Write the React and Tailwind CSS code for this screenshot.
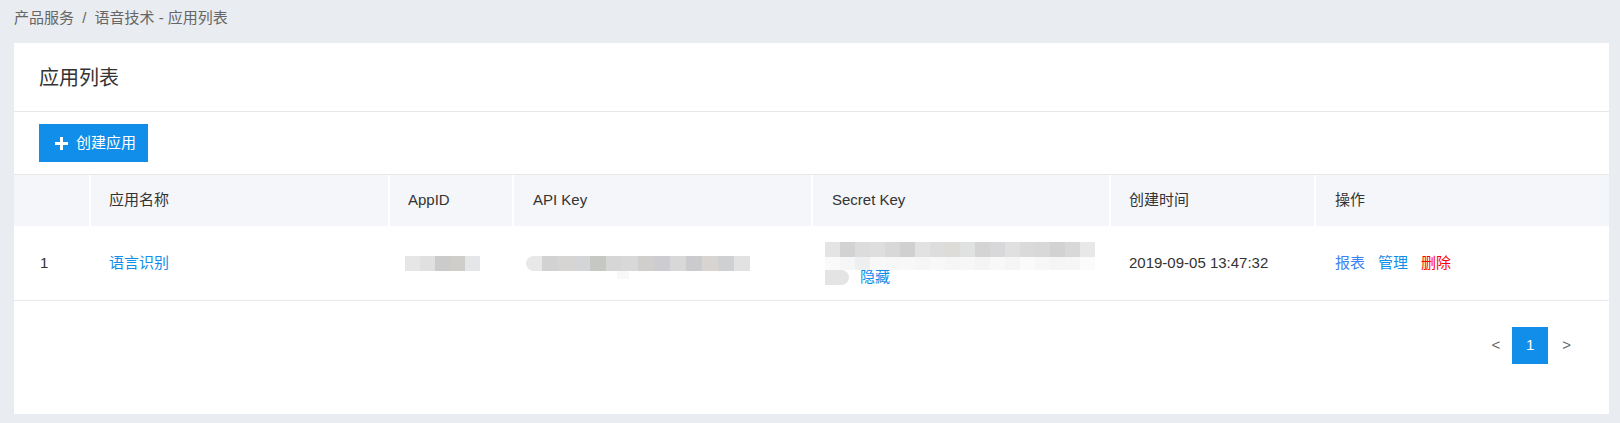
import React from 'react';

const font = { fontFamily: '"Liberation Sans", "Noto Sans CJK SC", sans-serif' };

// 打码的马赛克块
const Mosaic = ({ shades, size = 15, height = 15, round }) => (
    <div className="flex blur-[0.6px]">
        {shades.map((c, i) => (
            <div
                key={i}
                className={i === 0 && round ? 'rounded-l-full' : ''}
                style={{ width: size, height, background: c }}
            />
        ))}
    </div>
);

const appIdShades = ['#e6e6e6', '#e0e0e0', '#cbcbcb', '#d0ceca', '#e4e6e8'];
const apiKeyShades = ['#e8e8e8', '#d2d2d2', '#d6d5d4', '#d3d5d6', '#c6c8c4', '#d6d6d6', '#d8d8d8', '#d0cfcd', '#cdccd1', '#d8d8d8', '#cbcbcd', '#d8d4d1', '#cfd0d2', '#e2e2e2'];
const secretShades1 = ['#e4e4e4', '#d2d2d2', '#dcdcdc', '#dedede', '#d8d8d8', '#d0d0d0', '#e2e2e2', '#dddddd', '#dedcd8', '#e0e2e2', '#d4d4d4', '#d8d8da', '#e0e0e0', '#dadada', '#d8d8d8', '#d2d2d2', '#d8d8d8', '#e8e8e8'];
const secretShades2 = ['#fafafa', '#f6f6f6', '#eeeff1', '#f8f8f8', '#f7f7f7', '#f8f8f8', '#f6f6f6', '#f8f8f8', '#f6f6f6', '#f7f7f7', '#f4f4f4', '#f8f8f8', '#f5f5f5', '#fafafa', '#f7f7f7', '#f5f5f5', '#f6f6f6', '#fbfbfb'];

const cols = 'grid grid-cols-[75px_299px_124px_299px_298px_205px_295px]';

const App = () => {
    return (
        <div className="h-[423px] bg-[#e9ecf0] pl-[14px] pr-[11px] text-[#333]" style={font}>
            {/* 面包屑 */}
            <div className="h-[43px] pt-[7px] text-[15px] leading-[22px] text-[#666]">
                产品服务 <span className="mx-[4px]">/</span> 语音技术 - 应用列表
            </div>

            {/* 卡片 */}
            <div className="h-[371px] bg-white">
                <div className="flex h-[69px] items-center border-b border-[#e8e8e8] px-[25px] pt-[1px] text-[20px] text-[#333]">
                    应用列表
                </div>

                <div className="px-[25px] pt-[12px] pb-[12px]">
                    <button className="flex h-[38px] w-[109px] items-center bg-[#108ee9] pl-[15px] text-[15px] text-white">
                        <svg width="15" height="15" viewBox="0 0 15 15" className="mr-[7px]">
                            <path d="M7.5 1v13M1 7.5h13" stroke="#fff" strokeWidth="3" />
                        </svg>
                        创建应用
                    </button>
                </div>

                {/* 表格 */}
                <div className="border-t border-[#e8e8e8]">
                    <div className={`${cols} h-[51px] items-center bg-[#f5f6fa] text-[15px]`}>
                        <div className="h-full" />
                        <div className="flex h-full items-center border-l-2 border-white pl-[18px]">应用名称</div>
                        <div className="flex h-full items-center border-l-2 border-white pl-[18px]">AppID</div>
                        <div className="flex h-full items-center border-l-2 border-white pl-[19px]">API Key</div>
                        <div className="flex h-full items-center border-l-2 border-white pl-[19px]">Secret Key</div>
                        <div className="flex h-full items-center border-l-2 border-white pl-[18px]">创建时间</div>
                        <div className="flex h-full items-center border-l-2 border-white pl-[19px]">操作</div>
                    </div>

                    <div className={`${cols} h-[75px] items-center border-b border-[#e8eaf0] text-[15px]`}>
                        <div className="pl-[26px]">1</div>
                        <div className="pl-[20px] text-[#108ee9]">语言识别</div>
                        <div className="pl-[17px]">
                            <Mosaic shades={appIdShades} />
                        </div>
                        <div className="relative pl-[14px]">
                            <Mosaic shades={apiKeyShades} size={16} round />
                            <div className="absolute left-[105px] top-[15px] h-[8px] w-[12px] bg-[#f8f8fa]" />
                        </div>
                        <div className="pl-[14px]">
                            <Mosaic shades={secretShades1} />
                            <Mosaic shades={secretShades2} height={13} />
                            <div className="flex h-[15px] items-center">
                                <div className="h-[15px] w-[24px] rounded-r-full bg-[#e4e4e4] blur-[0.6px]" />
                                <span className="ml-[11px] text-[#108ee9]">隐藏</span>
                            </div>
                        </div>
                        <div className="pl-[20px]">2019-09-05 13:47:32</div>
                        <div className="flex gap-[13px] pl-[21px]">
                            <span className="text-[#3b82f6]">报表</span>
                            <span className="text-[#108ee9]">管理</span>
                            <span className="text-[#ff0000]">删除</span>
                        </div>
                    </div>

                    {/* 分页 */}
                    <div className="mt-[26px] flex items-center justify-end pr-[38px] text-[15px]">
                        <span className="text-[#666]">&lt;</span>
                        <div className="ml-[12px] flex h-[37px] w-[36px] items-center justify-center bg-[#108ee9] text-white">1</div>
                        <span className="ml-[14px] text-[#666]">&gt;</span>
                    </div>
                </div>
            </div>
        </div>
    );
};

export default App;
